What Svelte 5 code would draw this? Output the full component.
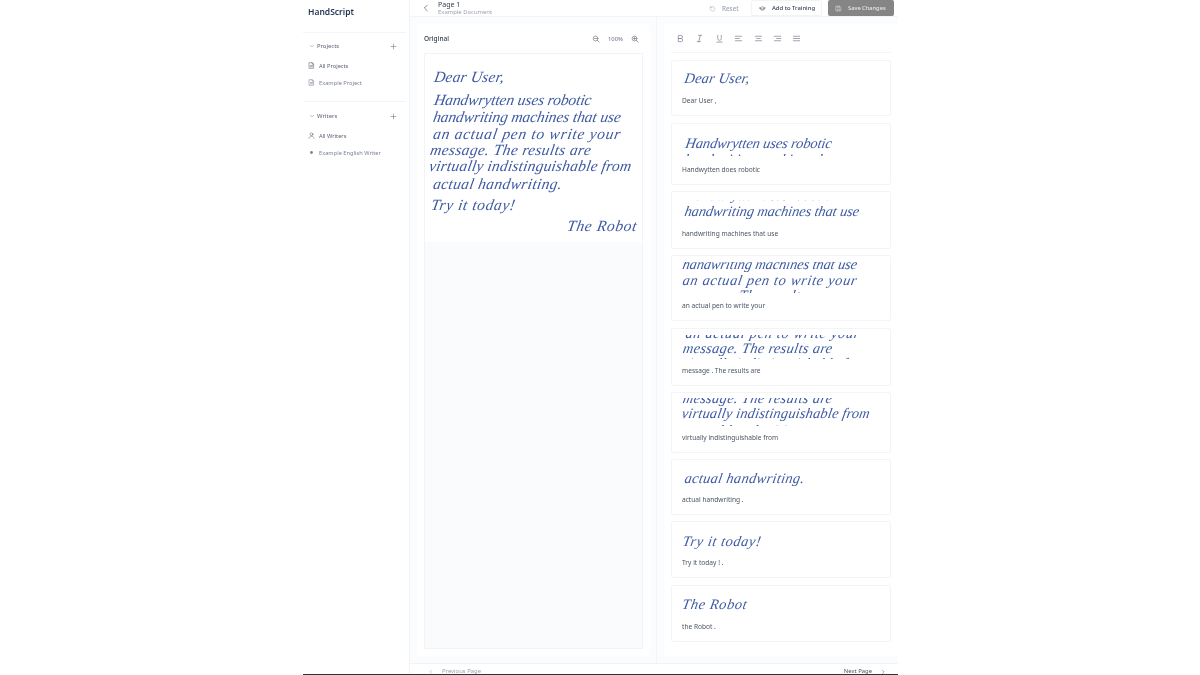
<script lang="ts">
	const projects = [{ label: 'All Projects', strong: true }, { label: 'Example Project', strong: false }];
	const writers = [
		{ label: 'All Writers', icon: 'user' },
		{ label: 'Example English Writer', icon: 'dot' }
	];
	// stand-in for the scanned page: one entry per handwritten line
	const lines = [
		{ text: 'Dear User,', x: 8, y: 15, ls: 0.2 },
		{ text: 'Handwrytten uses robotic', x: 8, y: 38, ls: -0.1 },
		{ text: 'handwriting machines that use', x: 7, y: 55, ls: -0.11 },
		{ text: 'an actual pen to write your', x: 7, y: 72, ls: 0.72 },
		{ text: 'message. The results are', x: 4, y: 88, ls: 0.37 },
		{ text: 'virtually indistinguishable from', x: 3, y: 104, ls: 0.2 },
		{ text: 'actual handwriting.', x: 7, y: 122, ls: 0.35 },
		{ text: 'Try it today!', x: 5, y: 143, ls: 0.6 },
		{ text: 'The Robot', x: 141, y: 164, ls: 0.65 }
	];
	// each segment crops the page, so neighbouring lines get clipped at its edges
	const segments = [
		{ label: 'Dear User ,', h: 56, pad: 6, crop: 23, show: [0], dx: -1, dy: -10, loose: false },
		{ label: 'Handwytten does robotic', h: 62, pad: 6, crop: 26, show: [1, 2], dx: 0, dy: -29, loose: true },
		{ label: 'handwriting machines that use', h: 58, pad: 8, crop: 22, show: [1, 2], dx: 0, dy: -47, loose: false },
		{ label: 'an actual pen to write your', h: 66, pad: 6, crop: 31, show: [2, 3, 4], dx: -2, dy: -56, loose: false },
		{ label: 'message . The results are', h: 58, pad: 6, crop: 24, show: [3, 4, 5], dx: 1, dy: -76, loose: true },
		{ label: 'virtually indistinguishable from', h: 61, pad: 5, crop: 28, show: [4, 5, 6], dx: 1, dy: -89, loose: false },
		{ label: 'actual handwriting .', h: 56, pad: 6, crop: 23, show: [6], dx: 0, dy: -109, loose: false },
		{ label: 'Try it today ! .', h: 57, pad: 6, crop: 24, show: [7], dx: 0, dy: -127, loose: false },
		{ label: 'the Robot .', h: 57, pad: 6, crop: 24, show: [8], dx: -127, dy: -148, loose: true }
	];
	const formats = ['B', 'I', 'U', 'left', 'center', 'right', 'justify'];
</script>

<div class="stage">
	<div class="frame">
		<aside class="sidebar">
			<div class="brand">HandScript</div>
			<section class="group">
				<div class="group-head">
					<svg class="chev" viewBox="0 0 10 10"><path d="M2.5 4 5 6.500 7.500 4" /></svg>
					<span>Projects</span>
					<svg class="plus" viewBox="0 0 10 10"><path d="M5 1.500v7M1.500 5h7" /></svg>
				</div>
				{#each projects as item}
					<div class="nav-item" class:strong={item.strong}>
						<svg class="nav-icon" viewBox="0 0 10 10">
							<path d="M2 1h4l2 2v6H2zM6 1v2h2M3.500 5h3M3.500 6.800h3" />
						</svg>
						<span>{item.label}</span>
					</div>
				{/each}
			</section>
			<section class="group">
				<div class="group-head">
					<svg class="chev" viewBox="0 0 10 10"><path d="M2.500 4 5 6.500 7.500 4" /></svg>
					<span>Writers</span>
					<svg class="plus" viewBox="0 0 10 10"><path d="M5 1.500v7M1.500 5h7" /></svg>
				</div>
				{#each writers as item}
					<div class="nav-item" class:strong={item.icon === 'user'}>
						{#if item.icon === 'user'}
							<svg class="nav-icon" viewBox="0 0 10 10">
								<circle cx="5" cy="3.200" r="2" /><path d="M1.500 9c.4-2 1.700-3 3.500-3s3.100 1 3.500 3" />
							</svg>
						{:else}
							<svg class="nav-icon" viewBox="0 0 10 10"><circle class="dot" cx="5" cy="5" r="2" /></svg>
						{/if}
						<span>{item.label}</span>
					</div>
				{/each}
			</section>
		</aside>

		<main class="main">
			<header class="topbar">
				<svg class="back" viewBox="0 0 10 10"><path d="M6.500 1.500 3 5l3.500 3.500" /></svg>
				<div class="page-title">
					<div class="page-name">Page 1</div>
					<div class="page-doc">Example Document</div>
				</div>
				<div class="actions">
					<button class="btn ghost">
						<svg viewBox="0 0 12 12"><path d="M2.200 2.200v2.600h2.600M2.400 4.800A4 4 0 1 1 2 7" /></svg>
						Reset
					</button>
					<button class="btn outline">
						<svg viewBox="0 0 12 12"><path d="M1 5l5-2 5 2-5 2zM3 6v2c1.600 1 4.400 1 6 0V6" /></svg>
						Add to Training
					</button>
					<button class="btn filled">
						<svg viewBox="0 0 12 12"><path d="M2 2h6l2 2v6H2zM4 2v2.500h3.500V2M4 10V7h4v3" /></svg>
						Save Changes
					</button>
				</div>
			</header>

			<div class="columns">
				<div class="col left">
					<section class="panel">
						<div class="panel-head">
							<span class="panel-title">Original</span>
							<div class="zoom">
								<svg viewBox="0 0 10 10"><circle cx="4.400" cy="4.400" r="3" /><path d="M6.600 6.600 9 9M3 4.400h2.800" /></svg>
								<span>100%</span>
								<svg viewBox="0 0 10 10"><circle cx="4.400" cy="4.400" r="3" /><path d="M6.600 6.600 9 9M3 4.400h2.800M4.400 3v2.800" /></svg>
							</div>
						</div>
						<div class="sheet">
							<div class="scan">
								{#each lines as line}
									<span class="ink" style="left:{line.x}px;top:{line.y}px;letter-spacing:{line.ls}px">{line.text}</span>
								{/each}
							</div>
						</div>
					</section>
				</div>
				<div class="col right">
					<section class="panel">
						<div class="toolbar">
							{#each formats as f}
								<span class="tool">
									{#if f === 'B'}
										<svg viewBox="0 0 10 10"><path d="M3 1.500h2.500a1.700 1.700 0 0 1 0 3.500H3zM3 5h3a1.800 1.800 0 0 1 0 3.500H3z" /></svg>
									{:else if f === 'I'}
										<svg viewBox="0 0 10 10"><path d="M4 1.500h3.500M2.500 8.500H6M5.800 1.500 4.200 8.500" /></svg>
									{:else if f === 'U'}
										<svg viewBox="0 0 10 10"><path d="M3 1.500V5a2 2 0 0 0 4 0V1.500M2 9h6" /></svg>
									{:else if f === 'left'}
										<svg viewBox="0 0 10 10"><path d="M1.500 2.500h7M1.500 5h4.500M1.500 7.500h7" /></svg>
									{:else if f === 'center'}
										<svg viewBox="0 0 10 10"><path d="M1.500 2.500h7M3 5h4M1.500 7.500h7" /></svg>
									{:else if f === 'right'}
										<svg viewBox="0 0 10 10"><path d="M1.500 2.500h7M4 5h4.500M1.500 7.500h7" /></svg>
									{:else}
										<svg viewBox="0 0 10 10"><path d="M1.500 2.500h7M1.500 5h7M1.500 7.500h7" /></svg>
									{/if}
								</span>
							{/each}
						</div>
						<div class="segments">
							{#each segments as seg}
								<article class="segment" class:loose={seg.loose} style="height:{seg.h}px;padding-top:{seg.pad}px">
									<div class="crop" style="height:{seg.crop}px">
										<div class="scan shifted" style="left:{seg.dx}px;top:{seg.dy}px">
											{#each seg.show as n}
												<span class="ink" style="left:{lines[n].x}px;top:{lines[n].y}px;letter-spacing:{lines[n].ls}px">{lines[n].text}</span>
											{/each}
										</div>
									</div>
									<p>{seg.label}</p>
								</article>
							{/each}
						</div>
					</section>
				</div>
			</div>

			<footer class="pager">
				<span class="prev"><svg viewBox="0 0 10 10"><path d="M6 2 3 5l3 3" /></svg>Previous Page</span>
				<span class="next">Next Page<svg viewBox="0 0 10 10"><path d="M4 2l3 3-3 3" /></svg></span>
			</footer>
		</main>
	</div>
</div>

<style>
	:global(body) {
		margin: 0;
		background: #fff;
		font-family: 'Noto Sans', 'Open Sans', sans-serif;
		color: #374151;
	}

	svg {
		fill: none;
		stroke: currentColor;
		stroke-width: 0.8;
		stroke-linecap: round;
		stroke-linejoin: round;
		display: block;
		flex: none;
	}

	.stage {
		width: 1200px;
		height: 675px;
		display: flex;
		justify-content: center;
		overflow: hidden;
	}

	.frame {
		width: 595px;
		height: 675px;
		margin-left: 1px;
		box-sizing: border-box;
		border-bottom: 1px solid #333;
		display: flex;
		overflow: hidden;
		filter: blur(0.3px);
	}

	.sidebar {
		width: 107px;
		flex: none;
		box-sizing: border-box;
		border-right: 1px solid #f1f3f6;
		background: #fff;
	}

	.brand {
		height: 32px;
		padding: 6px 0 0 5px;
		box-sizing: border-box;
		font-size: 8.5px;
		font-weight: 600;
		color: #1f3354;
		line-height: 11px;
	}

	.group {
		padding: 7px 0 10px;
		border-top: 1px solid #f3f4f6;
		margin-right: 3px;
	}

	.group + .group {
		padding-top: 8px;
	}

	.group-head {
		display: flex;
		align-items: center;
		height: 12px;
		padding: 0 9px 0 6px;
		font-size: 5.8px;
		font-weight: 500;
		color: #6b7280;
		gap: 2px;
	}

	.group-head span {
		flex: 1;
	}

	.chev {
		width: 6px;
		height: 6px;
	}

	.plus {
		width: 7px;
		height: 7px;
	}

	.nav-item {
		display: flex;
		align-items: center;
		gap: 4px;
		height: 17px;
		padding-left: 5px;
		font-size: 5.7px;
		color: #7b8494;
	}

	.nav-item.strong {
		color: #5b6472;
	}

	.group-head + .nav-item {
		margin-top: 5px;
	}

	.nav-icon {
		width: 7px;
		height: 7px;
	}

	.dot {
		fill: currentColor;
		stroke: none;
	}

	.main {
		flex: 1;
		min-width: 0;
		display: flex;
		flex-direction: column;
		background: #fbfcfd;
	}

	.topbar {
		height: 17px;
		flex: none;
		display: flex;
		align-items: center;
		box-sizing: border-box;
		background: #fff;
		border-bottom: 1px solid #f3f4f6;
		padding: 0 4px 0 12px;
	}

	.back {
		width: 8px;
		height: 8px;
		color: #374151;
		margin-right: 8px;
	}

	.page-name {
		font-size: 7px;
		line-height: 7px;
		color: #374151;
	}

	.page-doc {
		font-size: 5.9px;
		line-height: 8px;
		color: #9ca3af;
	}

	.actions {
		margin-left: auto;
		display: flex;
		align-items: flex-start;
		height: 16px;
	}

	.btn {
		font: inherit;
		font-size: 5.9px;
		font-weight: 500;
		height: 16px;
		display: flex;
		align-items: center;
		gap: 6px;
		border: 0;
		padding: 0;
		background: none;
		white-space: nowrap;
	}

	.btn svg {
		width: 7px;
		height: 7px;
	}

	.ghost {
		color: #9ca3af;
		font-size: 6.3px;
		width: 42px;
	}

	.outline {
		width: 71px;
		box-sizing: border-box;
		padding-left: 7px;
		color: #374151;
		background: #fff;
		border: 1px solid #f1f3f5;
		border-radius: 2px;
		margin-right: 6px;
	}

	.filled {
		width: 66px;
		box-sizing: border-box;
		padding-left: 7px;
		font-size: 5.7px;
		color: #e5e7eb;
		background: #858585;
		border-radius: 2px;
	}

	.columns {
		flex: 1;
		min-height: 0;
		display: flex;
	}

	.col {
		padding: 7px 6px 7px 7px;
		box-sizing: border-box;
		display: flex;
	}

	.col.left {
		width: 247px;
		border-right: 1px solid #f3f4f6;
	}

	.col.right {
		flex: 1;
		padding-right: 0;
	}

	.panel {
		flex: 1;
		min-width: 0;
		background: #fff;
		border-radius: 3px;
		display: flex;
		flex-direction: column;
		box-sizing: border-box;
	}

	.panel-head {
		height: 29px;
		flex: none;
		display: flex;
		align-items: center;
		justify-content: space-between;
		padding: 0 11px 0 7px;
	}

	.panel-title {
		font-size: 6.5px;
		font-weight: 500;
		color: #374151;
	}

	.zoom {
		display: flex;
		align-items: center;
		gap: 8px;
		font-size: 5.9px;
		color: #6b7280;
	}

	.zoom svg {
		width: 8px;
		height: 8px;
	}

	.sheet {
		flex: 1;
		margin: 0 7px 7px;
		border: 1px solid #f1f3f5;
		background: #fafbfc;
		border-radius: 1px;
	}

	.scan {
		position: relative;
		height: 188px;
		background: #fff;
	}

	.shifted {
		position: absolute;
		width: 219px;
		background: transparent;
		transform: scale(0.93);
		transform-origin: 0 0;
	}

	.ink {
		position: absolute;
		white-space: nowrap;
		font-family: 'Liberation Serif', serif;
		font-style: italic;
		font-size: 15.5px;
		line-height: 1;
		color: #3d5aa3;
		transform: skewX(-10deg);
		transform-origin: 0 100%;
	}

	.toolbar {
		height: 29px;
		flex: none;
		margin: 0 7px;
		display: flex;
		align-items: center;
		gap: 10.4px;
		padding-left: 5px;
		border-bottom: 1px solid #f3f4f6;
		box-sizing: border-box;
	}

	.tool {
		color: #7b8494;
		width: 9px;
		height: 9px;
	}

	.tool svg {
		width: 9px;
		height: 9px;
	}

	.segments {
		padding: 7px 7px 0;
		display: flex;
		flex-direction: column;
		gap: 6px;
	}

	.segment {
		border: 1px solid #f3f4f6;
		border-radius: 2px;
		box-sizing: border-box;
		padding: 6px 6px 10px 10px;
		background: #fff;
		display: flex;
		flex-direction: column;
	}

	.segment.loose {
		margin-top: 1px;
	}

	.crop {
		position: relative;
		overflow: hidden;
		margin-left: -5px;
		flex: none;
	}

	.segment p {
		margin: auto 0 0;
		font-size: 6.6px;
		line-height: 9px;
		color: #4b5563;
	}

	.pager {
		flex: none;
		height: 11px;
		border-top: 1px solid #f1f3f5;
		box-sizing: border-box;
		background: #fff;
		display: flex;
		justify-content: space-between;
		padding: 3px 12px 0 18px;
		font-size: 5.9px;
		line-height: 9px;
	}

	.pager span {
		display: flex;
		align-items: center;
		gap: 8px;
		height: 9px;
	}

	.pager svg {
		width: 6px;
		height: 6px;
	}

	.prev {
		color: #9ca3af;
	}

	.next {
		color: #4b5563;
	}
</style>
